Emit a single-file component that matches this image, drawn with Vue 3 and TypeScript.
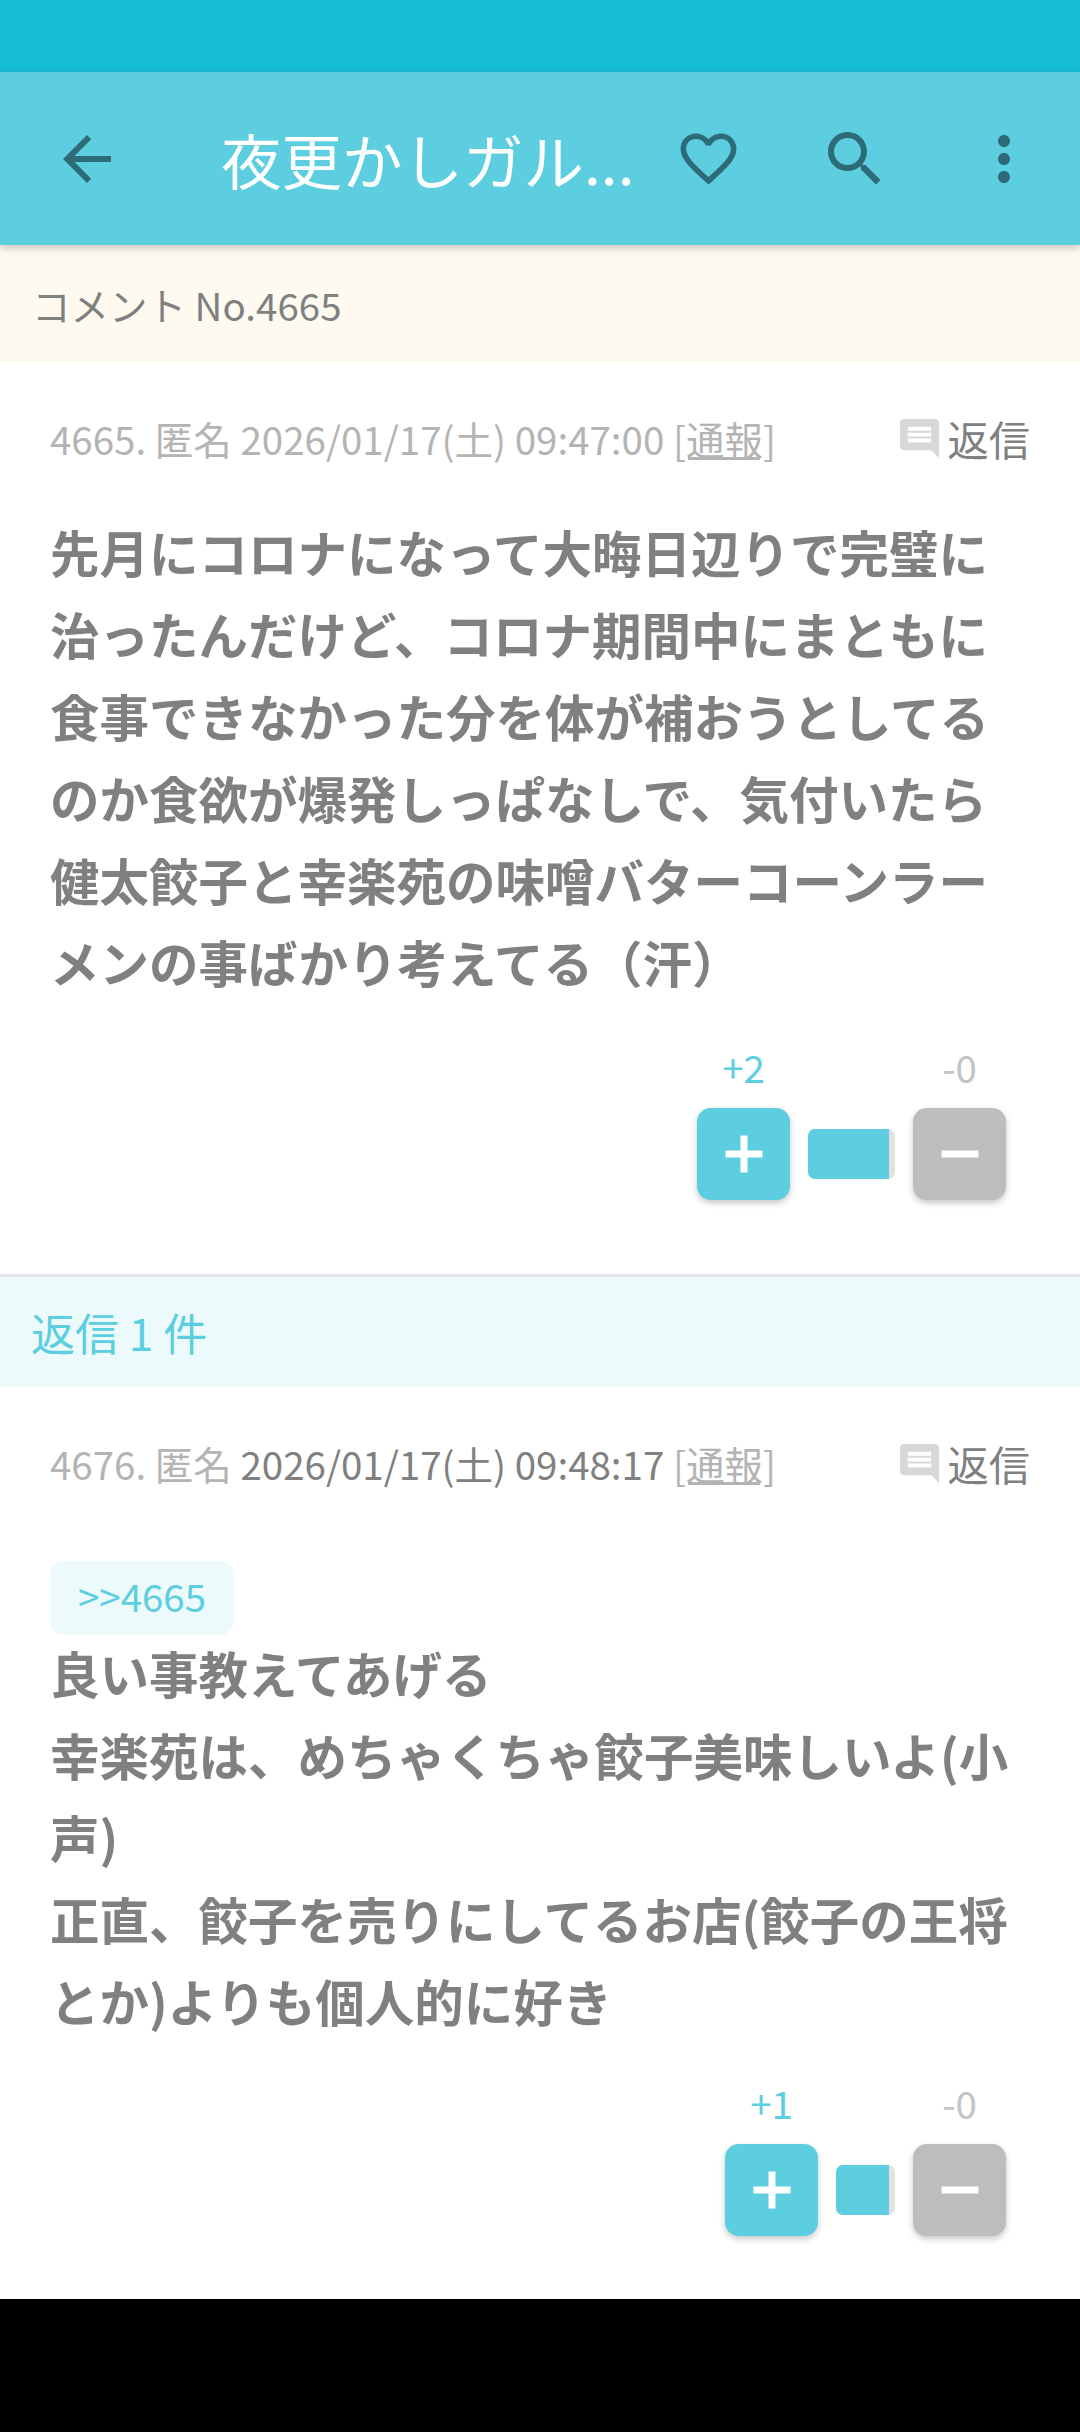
<script setup lang="ts">
interface Post {
  id: number
  meta: string
  dark: boolean
  quote?: string
  body: string[]
  plus: number
  ratio: number
  barWidth: number
}
const posts: Post[] = [
  {
    id: 4665,
    meta: '2026/01/17(土) 09:47:00',
    dark: false,
    body: ['先月にコロナになって大晦日辺りで完璧に治ったんだけど、コロナ期間中にまともに食事できなかった分を体が補おうとしてるのか食欲が爆発しっぱなしで、気付いたら健太餃子と幸楽苑の味噌バターコーンラーメンの事ばかり考えてる（汗）'],
    plus: 2,
    ratio: 93,
    barWidth: 87,
  },
  {
    id: 4676,
    meta: '2026/01/17(土) 09:48:17',
    dark: true,
    quote: '>>4665',
    body: ['良い事教えてあげる', '幸楽苑は、めちゃくちゃ餃子美味しいよ(小声)', '正直、餃子を売りにしてるお店(餃子の王将とか)よりも個人的に好き'],
    plus: 1,
    ratio: 90,
    barWidth: 59,
  },
]
</script>

<template>
  <div class="screen">
    <div class="status"></div>
    <header class="toolbar">
      <svg class="icon back" viewBox="0 0 24 24"><path d="M20 11H7.83l5.59-5.59L12 4l-8 8 8 8 1.41-1.41L7.83 13H20v-2z" /></svg>
      <div class="title">夜更かしガル...</div>
      <svg class="icon heart" viewBox="0 0 24 24"><path d="M16.5 3c-1.74 0-3.41.81-4.5 2.09C10.91 3.81 9.24 3 7.5 3 4.42 3 2 5.42 2 8.5c0 3.78 3.4 6.86 8.55 11.54L12 21.35l1.45-1.32C18.6 15.36 22 12.28 22 8.5 22 5.42 19.58 3 16.5 3zm-4.4 15.55l-.1.1-.1-.1C7.14 14.24 4 11.39 4 8.5 4 6.5 5.5 5 7.5 5c1.54 0 3.04.99 3.57 2.36h1.87C13.46 5.99 14.96 5 16.5 5c2 0 3.5 1.5 3.5 3.5 0 2.89-3.14 5.74-7.9 10.05z" /></svg>
      <svg class="icon search" viewBox="0 0 24 24"><path d="M15.5 14h-.79l-.28-.27C15.41 12.59 16 11.11 16 9.5 16 5.91 13.09 3 9.5 3S3 5.91 3 9.5 5.91 16 9.5 16c1.61 0 3.09-.59 4.23-1.57l.27.28v.79l5 4.99L20.49 19l-4.99-5zm-6 0C7.01 14 5 11.99 5 9.5S7.01 5 9.5 5 14 7.01 14 9.5 11.99 14 9.5 14z" /></svg>
      <svg class="icon more" viewBox="0 0 24 24"><path d="M12 8c1.1 0 2-.9 2-2s-.9-2-2-2-2 .9-2 2 .9 2 2 2zm0 2c-1.1 0-2 .9-2 2s.9 2 2 2 2-.9 2-2-.9-2-2-2zm0 6c-1.1 0-2 .9-2 2s.9 2 2 2 2-.9 2-2-.9-2-2-2z" /></svg>
    </header>
    <div class="notice">コメント No.4665</div>

    <template v-for="(post, i) in posts" :key="post.id">
      <article class="post" :class="{ second: i === 1 }">
        <div class="meta">
          <div class="meta-text">
            {{ post.id }}. 匿名 <span :class="{ dark: post.dark }">{{ post.meta }}</span> <span class="report">[通報]</span>
          </div>
          <div class="reply">
            <svg class="comment" viewBox="0 0 24 24"><path d="M21.99 4c0-1.1-.89-2-1.99-2H4c-1.1 0-2 .9-2 2v12c0 1.1.9 2 2 2h14l4 4-.01-18zM18 14H6v-2h12v2zm0-3H6V9h12v2zm0-3H6V6h12v2z" /></svg>
            <span>返信</span>
          </div>
        </div>
        <div v-if="post.quote" class="quote">{{ post.quote }}</div>
        <div class="body">
          <p v-for="line in post.body" :key="line">{{ line }}</p>
        </div>
        <div class="votes">
          <div class="vote">
            <div class="count plus">+{{ post.plus }}</div>
            <button class="btn btn-plus"><span class="h"></span><span class="v"></span></button>
          </div>
          <div class="bar" :style="{ width: post.barWidth + 'px' }">
            <div class="fill" :style="{ width: post.ratio + '%' }"></div>
          </div>
          <div class="vote">
            <div class="count minus">-0</div>
            <button class="btn btn-minus"><span class="h"></span></button>
          </div>
        </div>
      </article>
      <div v-if="i === 0" class="replies">返信 1 件</div>
    </template>
    <div class="navbar"></div>
  </div>
</template>

<style>
html, body { margin: 0; background: #fff; }
</style>

<style scoped>
.screen {
  width: 1080px;
  height: 2432px;
  display: flex;
  flex-direction: column;
  overflow: hidden;
  background: #fff;
  font-family: "Noto Sans CJK JP", sans-serif;
  color: #808080;
}
.status { height: 72px; background: #18bdd6; flex: none; }
.toolbar {
  height: 173px;
  flex: none;
  display: flex;
  align-items: center;
  background: #5ccedf;
  box-shadow: 0 3px 8px rgba(0, 0, 0, 0.22);
  position: relative;
  z-index: 1;
}
.icon { width: 72px; height: 72px; flex: none; fill: #2e6b78; }
.back { margin-left: 51px; }
.title {
  margin-left: 98px;
  width: 454px;
  color: #fff;
  font-size: 60.5px;
  line-height: 88px;
  white-space: nowrap;
}
.heart { width: 67px; height: 67px; }
.search { margin-left: 77px; }
.more { margin-left: 77px; }
.notice {
  height: 117px;
  flex: none;
  display: flex;
  align-items: center;
  padding-left: 32px;
  background: #fffaf0;
  font-size: 38.5px;
}
.post { padding: 0 50px; flex: none; }
.meta {
  height: 149px;
  box-sizing: border-box;
  padding-top: 52px;
  display: flex;
  align-items: flex-start;
  justify-content: space-between;
  font-size: 38.5px;
  line-height: 48px;
  color: #b4b4b4;
}
.meta-text { white-space: nowrap; }
.dark { color: #808080; }
.report { text-decoration: underline; }
.reply { display: flex; align-items: center; color: #808080; gap: 5px; font-size: 41.25px; }
.comment { width: 47px; height: 47px; fill: #d8d8d8; }
.body { font-size: 49.5px; font-weight: 700; line-height: 82px; }
.body p { margin: 0; }
.votes { display: flex; align-items: flex-end; justify-content: flex-end; gap: 18px; margin-top: 37px; padding: 0 24px 0 0; }
.second .votes { margin-top: 34px; }
.vote { display: flex; flex-direction: column; align-items: center; }
.count { font-size: 38.5px; line-height: 52px; margin-bottom: 16px; }
.plus { color: #5ccedf; }
.minus { color: #c4c4c4; }
.btn {
  width: 93px;
  height: 92px;
  border: 0;
  border-radius: 14px;
  padding: 0;
  position: relative;
  box-shadow: 0 3px 6px rgba(0, 0, 0, 0.22);
}
.btn-plus { background: #5ccedf; }
.btn-minus { background: #bdbdbd; }
.h, .v { position: absolute; background: #fff; left: 50%; top: 50%; }
.h { width: 37px; height: 7px; transform: translate(-50%, -50%); }
.v { width: 7px; height: 37px; transform: translate(-50%, -50%); }
.bar {
  height: 50px;
  margin-bottom: 21px;
  border-radius: 7px;
  background: #e2e2e2;
  overflow: hidden;
}
.fill { height: 100%; background: #5ccedf; }
.replies {
  margin-top: 74px;
  height: 110px;
  flex: none;
  display: flex;
  align-items: center;
  padding-left: 31px;
  border-top: 3px solid #e6e6e8;
  background: #ecfafc;
  color: #5ccedf;
  font-size: 44px;
}
.quote {
  margin: 25px 0 -3px;
  height: 74px;
  line-height: 68px;
  box-sizing: border-box;
  width: 184px;
  border-radius: 14px;
  background: #ecfafc;
  color: #5ccedf;
  font-size: 38.5px;
  white-space: nowrap;
  text-align: center;
}
.navbar { flex: 1; background: #000; margin-top: 63px; }
</style>
